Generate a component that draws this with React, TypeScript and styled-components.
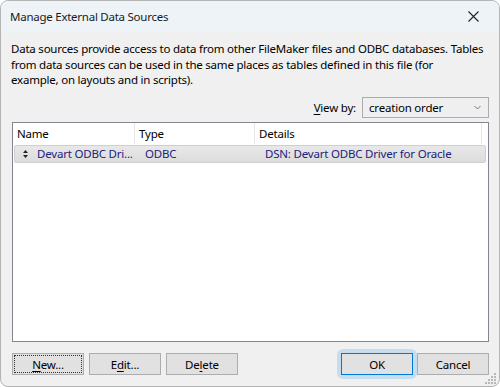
import React from 'react';
import styled, { createGlobalStyle } from 'styled-components';

const GlobalStyle = createGlobalStyle`
  html, body {
    margin: 0;
    padding: 0;
    background: #ffffff;
  }
  body {
    font-family: "Noto Sans", "Open Sans", sans-serif;
    font-size: 11.5px;
    letter-spacing: -0.2px;
  }
`;

const Window = styled.div`
  width: 500px;
  height: 387px;
  box-sizing: border-box;
  border: 1px solid #b4b4b4;
  border-radius: 8px;
  overflow: hidden;
  background: #f0f0f0;
  display: flex;
  flex-direction: column;
  position: relative;
`;

const TitleBar = styled.div`
  height: 31px;
  flex: none;
  display: flex;
  align-items: center;
  justify-content: space-between;
  padding: 0 20px 0 9px;
  background: #eef3f8;
  color: #1a1a1a;
  font-size: 11.5px;
  letter-spacing: -0.25px;
`;

const Body = styled.div`
  flex: 1;
  display: flex;
  flex-direction: column;
  padding: 9px 10px 11px 10px;
  min-height: 0;
`;

const Description = styled.p`
  margin: 0;
  line-height: 15.5px;
  color: #000;
  white-space: nowrap;
  letter-spacing: -0.22px;
`;

const ViewRow = styled.div`
  display: flex;
  justify-content: flex-end;
  align-items: center;
  gap: 6px;
  margin-top: 9px;
`;

const Label = styled.span`
  color: #000;
`;

const Combo = styled.div`
  width: 127px;
  height: 21px;
  box-sizing: border-box;
  border: 1px solid #acacac;
  background: #efefef;
  display: flex;
  align-items: center;
  justify-content: space-between;
  padding: 0 7px 0 6px;
`;

const ListBox = styled.div`
  flex: 1;
  margin-top: 4px;
  margin-left: 1px;
  border: 1px solid #82878f;
  background: #ffffff;
  display: flex;
  flex-direction: column;
`;

const HeaderRow = styled.div`
  display: grid;
  grid-template-columns: 122px 120px 227px 1fr;
  height: 21px;
`;

const HeaderCell = styled.div`
  display: flex;
  align-items: center;
  padding-left: 4px;
  border-right: 1px solid #e5e5e5;
  color: #000;
`;

const DataRow = styled.div`
  margin: 1px 2px 0 1px;
  height: 18px;
  box-sizing: border-box;
  display: grid;
  grid-template-columns: 121px 120px 1fr;
  border: 1px solid #cfcfcf;
  border-radius: 2px;
  background: linear-gradient(#e8e8e8, #dcdcdc);
  color: #22227e;
`;

const DataCell = styled.div`
  display: flex;
  align-items: center;
  gap: 9px;
  padding-left: ${(p: { $pad: number }) => p.$pad}px;
  white-space: nowrap;
`;

const SortIcon = styled.svg`
  flex: none;
  display: block;
`;

const ButtonRow = styled.div`
  display: flex;
  align-items: center;
  margin-top: 11px;
  padding-left: 1px;
`;

const Group = styled.div`
  display: flex;
  isolation: isolate;
  gap: ${(p: { $gap: number }) => p.$gap}px;
`;

const Spacer = styled.div`
  flex: 1;
`;

const Button = styled.button<{ $focus?: boolean; $default?: boolean }>`
  position: relative;
  width: 72px;
  height: 22px;
  box-sizing: border-box;
  border: 1px solid ${(p) => (p.$default ? '#0078d7' : '#adadad')};
  background: #e1e1e1;
  font-family: "Noto Sans", "Open Sans", sans-serif;
  font-size: 11.5px;
  letter-spacing: -0.2px;
  color: #000;
  padding: 0;
  outline: ${(p) => (p.$focus ? '1px dotted #333' : 'none')};
  outline-offset: -3px;

  &::before {
    content: '';
    display: ${(p) => (p.$default ? 'block' : 'none')};
    position: absolute;
    inset: -5px;
    border-radius: 6px;
    background: #c6ddf0;
    z-index: -1;
  }
`;

const Ul = styled.span`
  text-decoration: underline;
  text-underline-offset: 2px;
`;

const Grip = styled.svg`
  position: absolute;
  right: 2px;
  bottom: 2px;
`;

const App: React.FC = () => {
  return (
    <>
      <GlobalStyle />
      <Window>
        <TitleBar>
          <span>Manage External Data Sources</span>
          <svg width="11" height="11" viewBox="0 0 11 11">
            <path d="M0.5 0.5 L10.5 10.5 M10.5 0.5 L0.5 10.5" stroke="#222" strokeWidth="1.1" />
          </svg>
        </TitleBar>
        <Body>
          <Description>
            Data sources provide access to data from other FileMaker files and ODBC databases. Tables
            <br />
            from data sources can be used in the same places as tables defined in this file (for
            <br />
            example, on layouts and in scripts).
          </Description>
          <ViewRow>
            <Label>
              <Ul>V</Ul>iew by:
            </Label>
            <Combo>
              <span>creation order</span>
              <svg width="7" height="5" viewBox="0 0 7 5">
                <path d="M0.5 1 L3.5 4 L6.5 1" fill="none" stroke="#777" strokeWidth="1" />
              </svg>
            </Combo>
          </ViewRow>
          <ListBox>
            <HeaderRow>
              <HeaderCell>Name</HeaderCell>
              <HeaderCell>Type</HeaderCell>
              <HeaderCell>Details</HeaderCell>
              <div />
            </HeaderRow>
            <DataRow>
              <DataCell $pad={8}>
                <SortIcon width="5" height="8" viewBox="0 0 5 8">
                  <path d="M2.5 0 L5 3 L0 3 Z M2.5 8 L5 5 L0 5 Z" fill="#222" />
                </SortIcon>
                <span>Devart ODBC Dri...</span>
              </DataCell>
              <DataCell $pad={9}>ODBC</DataCell>
              <DataCell $pad={9}>DSN: Devart ODBC Driver for Oracle</DataCell>
            </DataRow>
          </ListBox>
          <ButtonRow>
            <Group $gap={5}>
              <Button $focus>
                <Ul>N</Ul>ew...
              </Button>
              <Button>
                E<Ul>d</Ul>it...
              </Button>
              <Button>
                De<Ul>l</Ul>ete
              </Button>
            </Group>
            <Spacer />
            <Group $gap={4}>
              <Button $default>OK</Button>
              <Button>Cancel</Button>
            </Group>
          </ButtonRow>
        </Body>
        <Grip width="12" height="12" viewBox="0 0 12 12">
          <g fill="#b8b8b8">
            <rect x="9" y="1" width="2" height="2" />
            <rect x="6" y="4" width="2" height="2" />
            <rect x="9" y="4" width="2" height="2" />
            <rect x="3" y="7" width="2" height="2" />
            <rect x="6" y="7" width="2" height="2" />
            <rect x="9" y="7" width="2" height="2" />
            <rect x="0" y="10" width="2" height="2" />
            <rect x="3" y="10" width="2" height="2" />
            <rect x="6" y="10" width="2" height="2" />
            <rect x="9" y="10" width="2" height="2" />
          </g>
        </Grip>
      </Window>
    </>
  );
};

export default App;
